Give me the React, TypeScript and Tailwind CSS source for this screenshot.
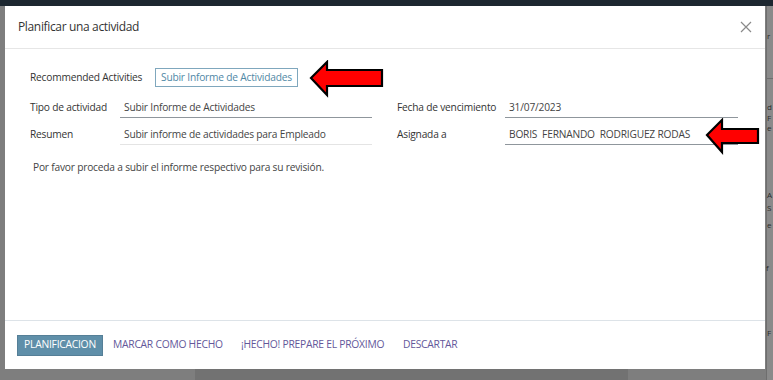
import React from "react";

export default function App() {
  const font = { fontFamily: '"Open Sans", "Noto Sans", sans-serif' };
  return (
    <div className="relative w-[773px] h-[380px] overflow-hidden bg-[#7e7e7e]" style={font}>
      {/* top dark bar */}
      <div className="h-[6px] bg-[#1d2730]" />
      {/* right page fragments behind overlay */}
      <div className="absolute left-[766px] top-[6px] w-[7px] h-[374px] bg-[#8a8a8a] border-l border-[#6e6e6e]" />
      <div className="absolute left-[766px] top-[78px] w-[7px] h-px bg-[#6f6f6f]" />
      <span className="absolute left-[767px] top-[32px] text-[8px] leading-none text-[#2a2a2a]">r</span>
      <span className="absolute left-[767px] top-[103px] text-[8px] leading-none text-[#2a2a2a]">d</span>
      <span className="absolute left-[767px] top-[114px] text-[8px] leading-none text-[#2a2a2a]">F</span>
      <span className="absolute left-[767px] top-[124px] text-[8px] leading-none text-[#2a2a2a]">e</span>
      <span className="absolute left-[767px] top-[191px] text-[8px] leading-none text-[#2a2a2a]">A</span>
      <span className="absolute left-[767px] top-[204px] text-[8px] leading-none text-[#2a2a2a]">S</span>
      <span className="absolute left-[767px] top-[221px] text-[8px] leading-none text-[#2a2a2a]">e</span>
      <span className="absolute left-[766px] top-[264px] text-[8px] leading-none text-[#2a2a2a]">f</span>
      <span className="absolute left-[767px] top-[329px] text-[8px] leading-none text-[#2a2a2a]">F</span>
      {/* bottom darker region */}
      <div className="absolute left-[195px] top-[369px] w-[433px] h-[11px] bg-[#727272]" />

      {/* modal */}
      <div className="relative ml-[5px] w-[760px] h-[363px] bg-white flex flex-col">
        <div className="h-[43px] flex items-center justify-between pl-[13px] pr-[13px] border-b border-[#e6e6e6]">
          <span className="text-[12px] text-[#333] tracking-[-0.35px]">Planificar una actividad</span>
          <svg width="12" height="12" viewBox="0 0 12 12">
            <path d="M1 1 L11 11 M11 1 L1 11" stroke="#8a8a8a" strokeWidth="1.2" />
          </svg>
        </div>

        <div className="flex-1 pl-[25px] pt-[19px] text-[10.2px] text-[#333] tracking-[-0.2px]">
          <div className="flex items-center h-[19px]">
            <span className="w-[125px]">Recommended Activities</span>
            <span className="h-[19px] px-[5px] flex items-center border border-[#7fa7bd] text-[#4f88a6]">
              Subir Informe de Actividades
            </span>
          </div>
          <div className="flex mt-[11px] gap-[25px]">
            <div className="w-[342px]">
              <div className="flex items-center h-[20px]">
                <span className="w-[90px]">Tipo de actividad</span>
                <span className="flex-1 h-[20px] flex items-center pl-[4px] border-b border-[#8f969c] text-[#444]">
                  Subir Informe de Actividades
                </span>
              </div>
              <div className="flex items-center h-[20px] mt-[7px]">
                <span className="w-[90px]">Resumen</span>
                <span className="flex-1 h-[20px] flex items-center pl-[4px] border-b border-[#e4e4e4] text-[#444]">
                  Subir informe de actividades para Empleado
                </span>
              </div>
            </div>
            <div className="w-[341px]">
              <div className="flex items-center h-[20px]">
                <span className="w-[108px]">Fecha de vencimiento</span>
                <span className="flex-1 h-[20px] flex items-center pl-[4px] border-b border-[#8f969c] text-[#444]">
                  31/07/2023
                </span>
              </div>
              <div className="flex items-center h-[20px] mt-[7px]">
                <span className="w-[108px]">Asignada a</span>
                <span className="flex-1 h-[20px] flex items-center pl-[4px] border-b border-[#8f969c] text-[#444] whitespace-pre">
                  {"BORIS  FERNANDO  RODRIGUEZ RODAS"}
                </span>
              </div>
            </div>
          </div>
          <p className="mt-[15px] pl-[3px] text-[#444]">
            Por favor proceda a subir el informe respectivo para su revisión.
          </p>
        </div>

        <div className="h-[49px] border-t border-[#dde3e8] flex items-center pl-[12px] text-[10.3px] tracking-[-0.25px] whitespace-nowrap">
          <button className="h-[21px] w-[86px] bg-[#5f8fa9] border border-[#557f97] text-white">PLANIFICACION</button>
          <span className="ml-[10px] w-[128px] text-[#63589a]">MARCAR COMO HECHO</span>
          <span className="w-[162px] text-[#63589a]">¡HECHO! PREPARE EL PRÓXIMO</span>
          <span className="text-[#63589a]">DESCARTAR</span>
        </div>

        {/* annotation arrows */}
        <svg className="absolute left-[299px] top-[54px] w-[82px] h-[38px]" viewBox="304 60 82 38">
          <path d="M311 78 L327 62 L327 70 L382 70 L382 86 L327 86 L327 95 Z" fill="#ff0000" stroke="#000" strokeWidth="2.2" />
        </svg>
        <svg className="absolute left-[695px] top-[112px] w-[62px] h-[44px]" viewBox="700 118 62 44">
          <path d="M707 135 L722 120 L722 129 L758 129 L758 143 L722 143 L722 152 Z" fill="#ff0000" stroke="#000" strokeWidth="2.2" />
        </svg>
      </div>
    </div>
  );
}
